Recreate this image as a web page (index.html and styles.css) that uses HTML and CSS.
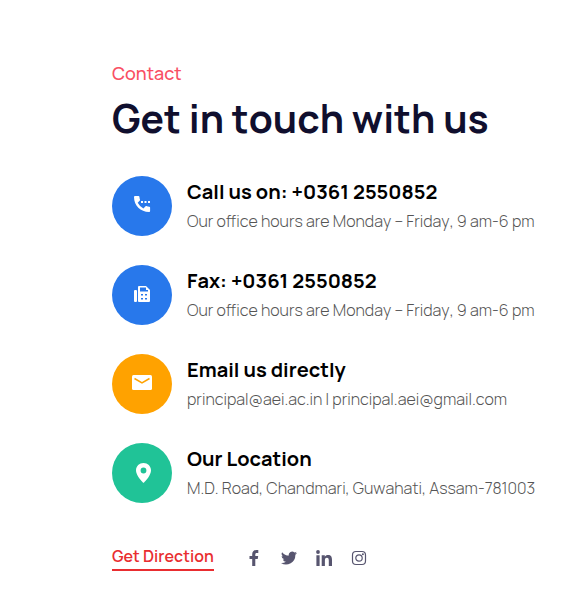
FILE: index.html
```html
<!DOCTYPE html>
<html lang="en">
<head>
<meta charset="utf-8">
<meta name="viewport" content="width=device-width, initial-scale=1">
<title>Contact</title>
<link rel="stylesheet" href="styles.css">
</head>
<body>
<main class="contact">
  <header>
    <p class="eyebrow">Contact</p>
    <h1 class="title">Get in touch with us</h1>
  </header>
  <ul class="list">
    <li class="item">
      <span class="badge blue"><svg width="20" height="20" viewBox="0 0 20 20" aria-hidden="true"><path d="M3 0h3.500q.8 0 .9.8.1 1.600.6 2.900.2.500-.2.900L5.700 6.700q2 3.800 5.700 5.700l2.100-2.100q.4-.4.9-.2 1.300.5 2.900.6.8.1.8.900V15q0 1-1 1C8.500 16 2 9.500 2 1q0-1 1-1z M9 5h2v2H9z M12.500 5h2v2h-2z M16 5h2v2h-2z"/></svg></span>
      <div><h2 class="name">Call us on: +0361 2550852</h2><p class="detail">Our office hours are Monday – Friday, 9 am-6 pm</p></div>
    </li>
    <li class="item">
      <span class="badge blue"><svg width="18" height="20" viewBox="0 0 18 20" aria-hidden="true"><path fill-rule="evenodd" d="M2 5h1q1 0 1 1v10q0 1-1 1H2q-1 0-1-1V6q0-1 1-1z M6 1h7l4 4v11q0 1-1 1H6q-1 0-1-1V2q0-1 1-1z M7 2.500v4h8V5h-2V2.500z M8 9v1.500h2V9z M12 9v1.500h2V9z M8 13v1.500h2V13z M12 13v1.500h2V13z"/></svg></span>
      <div><h2 class="name">Fax: +0361 2550852</h2><p class="detail">Our office hours are Monday – Friday, 9 am-6 pm</p></div>
    </li>
    <li class="item">
      <span class="badge orange"><svg width="22" height="18" viewBox="0 0 22 18" aria-hidden="true"><rect x="1" y="0" width="20" height="15" rx="1.500"/><path class="crease" d="M3.500 3.500 11 8l7.500-4.500"/></svg></span>
      <div><h2 class="name">Email us directly</h2><p class="detail">principal@aei.ac.in I principal.aei@gmail.com</p></div>
    </li>
    <li class="item">
      <span class="badge green"><svg width="18" height="20" viewBox="0 0 18 20" aria-hidden="true"><path fill-rule="evenodd" d="M10.500 0C6.300 0 3 3.200 3 7.300c0 2.200 1 4.500 2.400 6.700C7 16.500 10.500 20 10.500 20s3.500-3.500 5.100-6C17 11.800 18 9.500 18 7.300 18 3.200 14.700 0 10.500 0zm0 4.600a2.900 2.900 0 1 1 0 5.800 2.900 2.900 0 0 1 0-5.800z"/></svg></span>
      <div><h2 class="name">Our Location</h2><p class="detail">M.D. Road, Chandmari, Guwahati, Assam-781003</p></div>
    </li>
  </ul>
  <footer class="footer">
    <a class="direction" href="#map">Get Direction</a>
    <nav class="social" aria-label="Social media">
      <a href="#facebook" aria-label="Facebook"><svg width="16" height="16" viewBox="0 0 16 16" aria-hidden="true"><path d="M6.200 16V9H3.500V6h2.700V4.200C6.200 1.500 7.800 0 10.300 0h2v2.900h-1.500c-1.200 0-1.500.6-1.500 1.500V6h2.900l-.5 3H9.300v7z"/></svg></a>
      <a href="#twitter" aria-label="Twitter"><svg width="16" height="16" viewBox="0 0 24 24" aria-hidden="true"><path d="M24 4.600a10 10 0 0 1-2.800.8 5 5 0 0 0 2.100-2.700 10 10 0 0 1-3.100 1.200 4.900 4.900 0 0 0-8.400 4.500A14 14 0 0 1 1.700 3.200a4.900 4.900 0 0 0 1.500 6.500A5 5 0 0 1 1 9.100a4.900 4.900 0 0 0 3.900 4.900 5 5 0 0 1-2.200.1 4.900 4.900 0 0 0 4.600 3.400A10 10 0 0 1 0 19.500 14 14 0 0 0 21.500 7.100 10 10 0 0 0 24 4.600z"/></svg></a>
      <a href="#linkedin" aria-label="LinkedIn"><svg width="16" height="16" viewBox="0 0 16 16" aria-hidden="true"><circle cx="2" cy="2" r="1.900"/><path d="M.4 5.300h3.200V16H.4z M5.700 5.300h3.100v1.500C9.500 5.600 10.500 5 12 5c3.100 0 4 2 4 4.900V16h-3.200v-5.300c0-1.700-.3-2.900-1.900-2.900S8.900 9 8.900 10.600V16H5.700z"/></svg></a>
      <a href="#instagram" aria-label="Instagram"><svg width="16" height="16" viewBox="0 0 16 16" aria-hidden="true"><g class="outline"><rect x="1.500" y="1.500" width="13" height="13" rx="3.500"/><circle cx="8" cy="8" r="3.200"/></g><circle cx="11.900" cy="4.200" r="1"/></svg></a>
    </nav>
  </footer>
</main>
</body>
</html>
```
FILE: styles.css
```css
* { box-sizing: border-box; }
body {
  margin: 0;
  background: #fff;
  color: #000;
  font-family: Manrope, Inter, "Liberation Sans", sans-serif;
  font-kerning: none;
}
h1, h2, p, ul { margin: 0; padding: 0; }
svg { display: block; fill: currentColor; }
.contact { padding: 59px 16px 28px 112px; }
.eyebrow { color: #f94f63; font-size: 18px; line-height: 28px; font-weight: 500; }
.title {
  margin-top: 4px;
  color: #100f2e;
  font-size: 39px;
  line-height: 54px;
  font-weight: 700;
}
.list { display: grid; gap: 29px; margin-top: 31px; list-style: none; }
.item { display: flex; align-items: center; gap: 15px; }
.badge {
  display: grid;
  flex: none;
  place-items: center;
  width: 60px;
  height: 60px;
  border-radius: 50%;
  color: #fff;
}
.blue { background: #2878eb; }
.orange { background: #ffa200; }
.green { background: #20c397; }
.crease { fill: none; stroke: #ffa200; stroke-width: 1.5; }
.name { font-size: 20px; line-height: 30px; font-weight: 700; }
.detail { color: #555; font-size: 16px; line-height: 28px; font-weight: 300; }
.footer { display: flex; align-items: center; gap: 32px; margin-top: 40px; }
.direction {
  border-bottom: 2px solid #e92d30;
  color: #e92d30;
  font-size: 16px;
  line-height: 26px;
  font-weight: 600;
  text-decoration: none;
}
.social { display: flex; gap: 19px; padding-top: 2px; color: #57556f; }
.social a { color: inherit; }
.outline { fill: none; stroke: currentColor; stroke-width: 1.2; }
```
